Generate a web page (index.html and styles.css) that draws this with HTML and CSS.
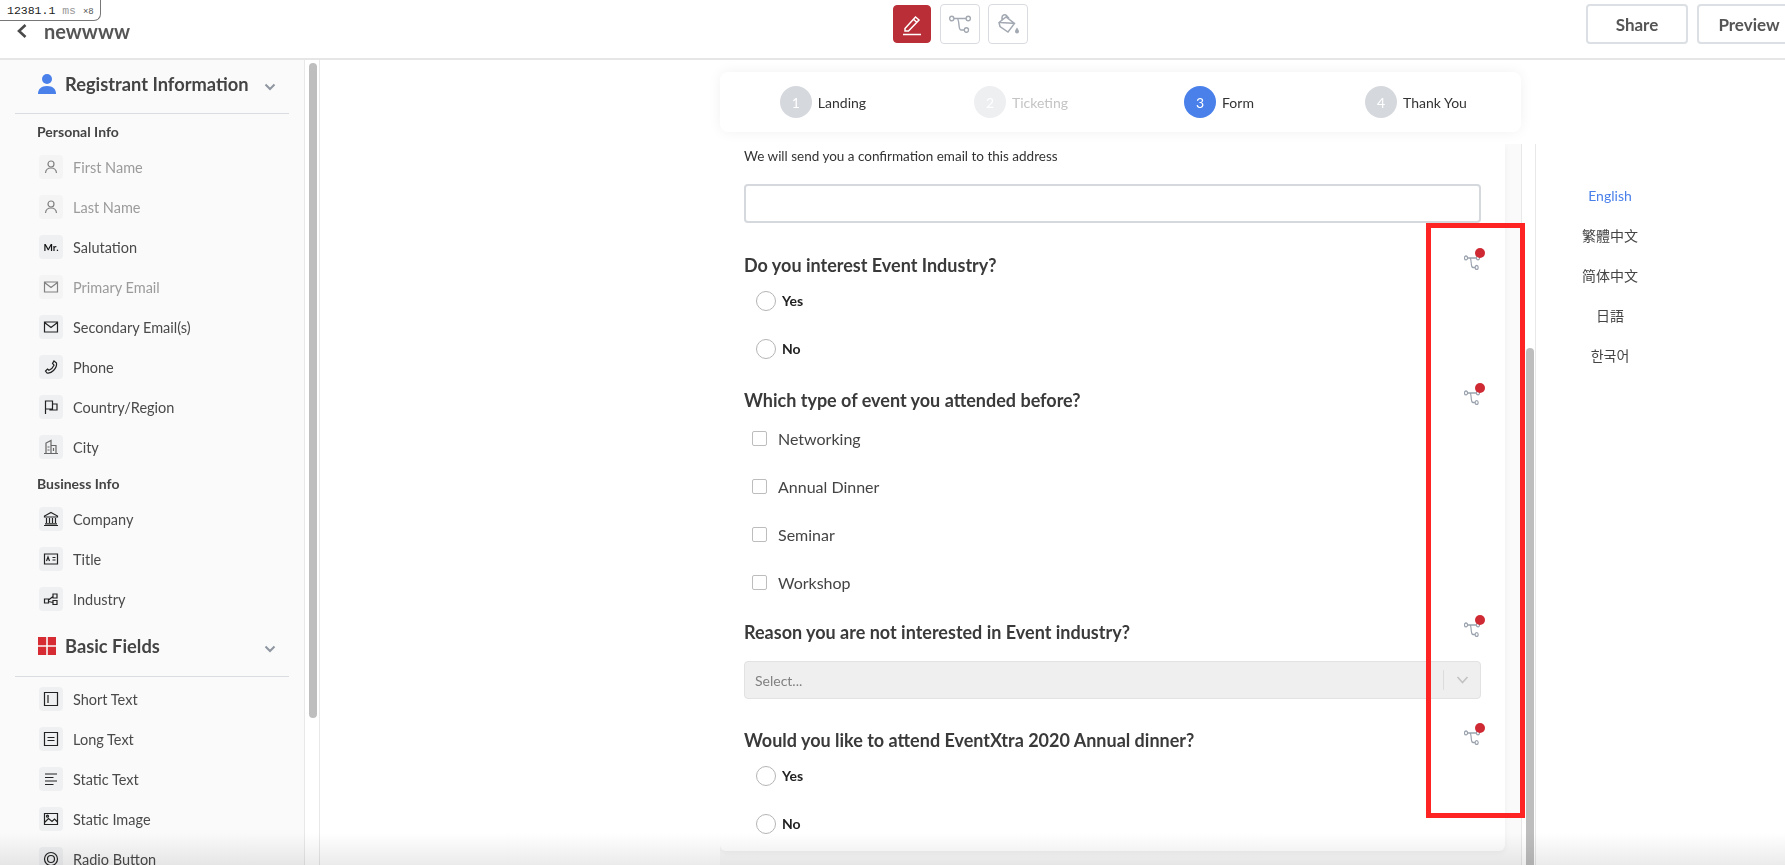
FILE: index.html
```html
<!DOCTYPE html>
<html lang="en">
<head>
  <meta charset="UTF-8" />
  <meta name="viewport" content="width=device-width, initial-scale=1.0" />
  <title>newwww</title>
  <link rel="stylesheet" href="styles.css">
</head>
<body>
  <svg class="sprites" width="0" height="0" aria-hidden="true">
    <symbol id="i-person" viewBox="0 0 16 16"><circle cx="8" cy="5" r="3" /><path d="M2.500 14c.3-3.200 2.600-5 5.500-5s5.200 1.800 5.500 5" /></symbol>
    <symbol id="i-mail" viewBox="0 0 16 16"><path d="M1.500 3h13v10h-13zM1.500 3.500L8 8.500l6.500-5" /></symbol>
    <symbol id="i-phone" viewBox="0 0 16 16"><path d="M11 2l2.500 2c.5 3-1 5.500-3 7.500s-4.500 3-6.500 2.500L2.500 12l2-2 1.500 1.200c2-.7 4-2.700 5-5L9.500 4.500z" /></symbol>
    <symbol id="i-flag" viewBox="0 0 16 16"><path d="M2.500 15V2h7v8h-7M9.500 5h4.500v6H7v-1" /></symbol>
    <symbol id="i-city" viewBox="0 0 16 16"><path d="M1 14.500h14M3 14.500V4l5-2.500v13M8 6.500h5v8M4.500 8h2M4.500 11h2M10.500 9v3" /></symbol>
    <symbol id="i-bank" viewBox="0 0 16 16"><path d="M8 1.500L14.500 5v1h-13V5zM1 14.500h14M2 12.800h12M3.500 7v5M6.500 7v5M9.500 7v5M12.500 7v5" /></symbol>
    <symbol id="i-card" viewBox="0 0 16 16"><path d="M1.500 3h13v10h-13zM3.500 10l1.500-4 1.500 4M9.500 6.500h3M9.500 9h3" /></symbol>
    <symbol id="i-tree" viewBox="0 0 16 16"><path d="M1.500 8h4v4h-4zM10 3h4v4h-4zM10 9.500h4v4h-4zM5.500 9L10 5.500M5.500 10.500L10 11.500" /></symbol>
    <symbol id="i-short" viewBox="0 0 16 16"><path d="M1.500 1.500h13v13h-13zM5 4v8" /></symbol>
    <symbol id="i-long" viewBox="0 0 16 16"><path d="M1.500 1.500h13v13h-13z" /><path class="thick" d="M4.500 6.500h7M4.500 9.500h7" /></symbol>
    <symbol id="i-lines" viewBox="0 0 16 16"><path d="M2 3h12M2 6.500h8.500M2 10h12M2 13.500h8.500" /></symbol>
    <symbol id="i-image" viewBox="0 0 16 16"><path d="M1.500 2.500h13v11h-13zM1.500 11.500l4-4 3.500 3 2.500-2.500 3 3" /><circle cx="4.500" cy="5.200" r="1" /></symbol>
    <symbol id="i-radio" viewBox="0 0 16 16"><circle cx="8" cy="8" r="6.500" /><circle class="solid" cx="8" cy="8" r="3.500" /></symbol>
    <symbol id="i-logic" viewBox="0 0 24 18" preserveAspectRatio="none"><circle cx="3" cy="3.500" r="2.300" /><circle cx="21" cy="3.500" r="2.300" /><circle cx="19" cy="15" r="2.300" /><path d="M5.300 3.500h13.400M9 3.500c1.500 1 1.500 3 2 7.500.2 2 1 4 2.500 4h3.200" /></symbol>
  </svg>

  <div class="debug-badge"><b>12381.1</b> ms <small>×8</small></div>

  <header class="topbar">
    <div class="topbar-left">
      <svg class="back" viewBox="0 0 12 16"><path d="M9.500 2L3 8l6.500 6" /></svg>
      <span class="event-name">newwww</span>
    </div>
    <div class="tools">
      <button class="tool tool-active" type="button">
        <svg viewBox="0 0 24 24"><path d="M5 16.500L15.500 5l3.500 3L8.500 19H5zM13.500 7.300l3.500 3.200M3 22.500h18" /></svg>
      </button>
      <button class="tool" type="button">
        <svg class="tool-logic"><use href="#i-logic" /></svg>
      </button>
      <button class="tool" type="button">
        <svg viewBox="0 0 24 24"><path d="M3 10.500L10 5l8.500 6.500-6.500 8.500-8-5.500zM3 10.500C5 10 12 11 18.500 11.500M6 8V5.500C6 3 9 2 10.500 3.500L13 6.500" /><path class="drop" d="M21 15.500c1.300 2 2 3 2 4a2 2 0 0 1-4 0c0-1 .7-2 2-4z" /></svg>
      </button>
    </div>
    <div class="actions">
      <button class="action" type="button">Share</button>
      <button class="action action-preview" type="button">Preview</button>
    </div>
  </header>

  <div class="workspace">
    <aside class="sidebar">
      <section class="palette">
        <h2 class="palette-title">
          <svg class="palette-icon" viewBox="0 0 18 20"><circle cx="9" cy="5" r="5" fill="#4a80ea" /><path d="M0 20c0-5 3-8 9-8s9 3 9 8z" fill="#4a80ea" /></svg>
          <span>Registrant Information</span>
          <svg class="caret" viewBox="0 0 12 8"><path d="M1.500 1.500L6 6l4.500-4.500" /></svg>
        </h2>
        <h3 class="palette-group">Personal Info</h3>
        <ul class="palette-list">
          <li class="palette-item is-used"><span class="glyph"><svg><use href="#i-person" /></svg></span>First Name</li>
          <li class="palette-item is-used"><span class="glyph"><svg><use href="#i-person" /></svg></span>Last Name</li>
          <li class="palette-item"><span class="glyph glyph-text">Mr.</span>Salutation</li>
          <li class="palette-item is-used"><span class="glyph"><svg><use href="#i-mail" /></svg></span>Primary Email</li>
          <li class="palette-item"><span class="glyph"><svg><use href="#i-mail" /></svg></span>Secondary Email(s)</li>
          <li class="palette-item"><span class="glyph"><svg><use href="#i-phone" /></svg></span>Phone</li>
          <li class="palette-item"><span class="glyph"><svg><use href="#i-flag" /></svg></span>Country/Region</li>
          <li class="palette-item"><span class="glyph glyph-soft"><svg><use href="#i-city" /></svg></span>City</li>
        </ul>
        <h3 class="palette-group palette-group-next">Business Info</h3>
        <ul class="palette-list">
          <li class="palette-item"><span class="glyph"><svg><use href="#i-bank" /></svg></span>Company</li>
          <li class="palette-item"><span class="glyph"><svg><use href="#i-card" /></svg></span>Title</li>
          <li class="palette-item"><span class="glyph"><svg><use href="#i-tree" /></svg></span>Industry</li>
        </ul>
      </section>
      <section class="palette palette-basic">
        <h2 class="palette-title">
          <svg class="palette-icon" viewBox="0 0 18 18"><path d="M0 0h8.200v8.200H0zM9.800 0H18v8.200H9.800zM0 9.800h8.200V18H0zM9.800 9.800H18V18H9.800z" fill="#d62b32" /></svg>
          <span>Basic Fields</span>
          <svg class="caret" viewBox="0 0 12 8"><path d="M1.500 1.500L6 6l4.500-4.500" /></svg>
        </h2>
        <ul class="palette-list palette-list-basic">
          <li class="palette-item"><span class="glyph"><svg><use href="#i-short" /></svg></span>Short Text</li>
          <li class="palette-item"><span class="glyph"><svg><use href="#i-long" /></svg></span>Long Text</li>
          <li class="palette-item"><span class="glyph"><svg><use href="#i-lines" /></svg></span>Static Text</li>
          <li class="palette-item"><span class="glyph"><svg><use href="#i-image" /></svg></span>Static Image</li>
          <li class="palette-item"><span class="glyph"><svg><use href="#i-radio" /></svg></span>Radio Button</li>
        </ul>
      </section>
    </aside>
    <div class="rail rail-side"><div class="thumb thumb-side"></div></div>

    <main class="canvas">
      <div class="stage">
        <nav class="steps">
          <div class="step"><span class="step-num">1</span>Landing</div>
          <div class="step step-off"><span class="step-num">2</span>Ticketing</div>
          <div class="step step-on"><span class="step-num">3</span>Form</div>
          <div class="step"><span class="step-num">4</span>Thank You</div>
        </nav>
        <div class="viewport">
          <div class="form-wrap">
            <form class="form-card" onsubmit="return false">
              <p class="note">We will send you a confirmation email to this address</p>
              <input class="text-input" type="text" />

              <div class="question question-q1">
                <h4 class="question-title">Do you interest Event Industry?<span class="logic-flag"><svg><use href="#i-logic" /></svg></span></h4>
                <label class="radio-row"><span class="radio"></span>Yes</label>
                <label class="radio-row"><span class="radio"></span>No</label>
              </div>

              <div class="question">
                <h4 class="question-title">Which type of event you attended before?<span class="logic-flag"><svg><use href="#i-logic" /></svg></span></h4>
                <div class="check-list">
                  <label class="check-row"><span class="check"></span>Networking</label>
                  <label class="check-row"><span class="check"></span>Annual Dinner</label>
                  <label class="check-row"><span class="check"></span>Seminar</label>
                  <label class="check-row"><span class="check"></span>Workshop</label>
                </div>
              </div>

              <div class="question question-q3">
                <h4 class="question-title">Reason you are not interested in Event industry?<span class="logic-flag"><svg><use href="#i-logic" /></svg></span></h4>
                <div class="fake-select">
                  <span class="fake-select-value">Select...</span>
                  <span class="fake-select-caret"><svg viewBox="0 0 12 8"><path d="M1 1l5 5.500L11 1" /></svg></span>
                </div>
              </div>

              <div class="question question-q4">
                <h4 class="question-title">Would you like to attend EventXtra 2020 Annual dinner?<span class="logic-flag"><svg><use href="#i-logic" /></svg></span></h4>
                <label class="radio-row"><span class="radio"></span>Yes</label>
                <label class="radio-row"><span class="radio"></span>No</label>
              </div>
            </form>
          </div>
        </div>
      </div>
      <div class="rail rail-main"><div class="thumb thumb-main"></div></div>
      <ul class="langs">
        <li class="lang lang-on">English</li>
        <li class="lang" lang="zh-Hant">繁體中文</li>
        <li class="lang" lang="zh-Hans">简体中文</li>
        <li class="lang" lang="ja">日語</li>
        <li class="lang" lang="ko">한국어</li>
      </ul>
    </main>
  </div>

  <div class="highlight-box"></div>
  <div class="bottom-fade"></div>
</body>
</html>
```

FILE: styles.css
```css
* {
  box-sizing: border-box;
}

html, body {
  height: 100%;
}

body {
  margin: 0;
  overflow: hidden;
  background: #fff;
  color: #444;
  font-family: Lato, "Noto Sans CJK TC", sans-serif;
  font-size: 14px;
}

.sprites {
  position: absolute;
}

h2, h3, h4, p, ul {
  margin: 0;
  padding: 0;
}

ul {
  list-style: none;
}

/* recording badge in the corner */
.debug-badge {
  position: absolute;
  top: 0;
  left: 0;
  z-index: 20;
  width: 101px;
  height: 21px;
  padding: 2px 0 0 7px;
  background: #fff;
  border: 1px solid #777;
  border-top: none;
  border-left: none;
  border-bottom-right-radius: 7px;
  font-family: "Liberation Mono", monospace;
  font-size: 11.500px;
  line-height: 17px;
  color: #999;
  white-space: nowrap;
}

.debug-badge b {
  font-weight: 400;
  color: #222;
}

.debug-badge small {
  font-size: 9px;
  color: #555;
}

/* top bar */
.topbar {
  display: flex;
  align-items: flex-start;
  height: 60px;
  padding-top: 4px;
  overflow: hidden;
  border-bottom: 2px solid #e6e6e6;
}

.topbar-left {
  display: flex;
  align-items: center;
  width: 893px;
  height: 54px;
  padding-left: 16px;
}

.back {
  width: 12px;
  height: 16px;
  margin-right: 16px;
  fill: none;
  stroke: #4a4a4a;
  stroke-width: 2.600;
}

.event-name {
  font-size: 20px;
  font-weight: 700;
  color: #555;
}

.tools {
  display: flex;
  gap: 8px;
  align-items: center;
  height: 40px;
}

.tool {
  display: flex;
  align-items: center;
  justify-content: center;
  width: 40px;
  height: 40px;
  padding: 0;
  background: #fff;
  border: 1px solid #d8dbe0;
  border-radius: 4px;
}

.tool svg {
  width: 24px;
  height: 24px;
  fill: none;
  stroke: #a3a9b2;
  stroke-width: 1.500;
}

.tool .drop {
  fill: #a3a9b2;
  stroke: none;
}

.tool .tool-logic {
  width: 22px;
  height: 18px;
}

.tool-active {
  width: 38px;
  height: 38px;
  margin-right: 1px;
  background: #b92e37;
  border-color: #b92e37;
}

.tool-active svg {
  stroke: #fff;
}

.actions {
  display: flex;
  flex-shrink: 0;
  gap: 9px;
  margin-left: 558px;
}

.action {
  width: 102px;
  height: 40px;
  padding: 0;
  background: #fff;
  border: 2px solid #dcdfe3;
  border-radius: 4px;
  font-family: inherit;
  font-size: 17px;
  font-weight: 700;
  color: #555;
}

.action-preview {
  width: 104px;
  margin-right: -20px;
}

/* main layout */
.workspace {
  display: flex;
  height: calc(100vh - 60px);
}

.sidebar {
  flex: 0 0 305px;
  height: 100%;
  overflow: hidden;
  padding-top: 2px;
  background: #fafafa;
  border-right: 1px solid #e8e8e8;
}

.rail {
  position: relative;
  flex: 0 0 15px;
  overflow: hidden;
}

.rail-side {
  flex-basis: 15px;
  border-right: 1px solid #e8e8e8;
}

.thumb {
  position: absolute;
  width: 8px;
  background: #bebebe;
  border-radius: 4px;
}

.thumb-side {
  top: 3px;
  left: 4px;
  height: 655px;
}

.palette-title {
  display: flex;
  align-items: center;
  height: 52px;
  margin: 0 15px;
  padding: 0 0 8px 23px;
  border-bottom: 1px solid #d9dce0;
  font-size: 18.300px;
  font-weight: 700;
  color: #444;
  white-space: nowrap;
}

.palette-icon {
  flex: 0 0 18px;
  width: 18px;
  height: 20px;
  margin-right: 9px;
}

.caret {
  width: 12px;
  height: 8px;
  margin-left: auto;
  margin-right: 13px;
  margin-top: 6px;
  fill: none;
  stroke: #8f96a0;
  stroke-width: 2;
}

.palette-group {
  height: 18px;
  margin: 9px 0 0 37px;
  font-size: 14px;
  font-weight: 700;
  line-height: 18px;
  color: #444;
}

.palette-group-next {
  margin-top: 8px;
}

.palette-list {
  margin-top: 6px;
}

.palette-item {
  display: flex;
  align-items: center;
  gap: 10px;
  height: 40px;
  padding-left: 39px;
  font-size: 14.500px;
  color: #4a4a4a;
}

.palette-item.is-used {
  color: #9b9b9b;
}

.palette-item.is-used .glyph {
  background: #f4f4f5;
}

.palette-item.is-used .glyph svg {
  stroke: #808080;
}

.glyph {
  display: flex;
  flex: 0 0 24px;
  align-items: center;
  justify-content: center;
  width: 24px;
  height: 24px;
  background: #eff0f2;
  border-radius: 4px;
}

.glyph svg {
  width: 16px;
  height: 16px;
  fill: none;
  stroke: #222;
  stroke-width: 1.200;
}

.glyph .thick {
  stroke-width: 2;
}

.glyph .solid {
  fill: #222;
}

.glyph-soft svg {
  stroke: #666;
}

.glyph-text {
  font-size: 10px;
  font-weight: 700;
  color: #111;
}

.palette-basic {
  margin-top: 5px;
}

.palette-basic .palette-title {
  height: 53px;
  padding-bottom: 9px;
}

.palette-list-basic {
  margin-top: 2px;
}

/* canvas */
.canvas {
  display: flex;
  flex: 1;
  min-width: 0;
  height: 100%;
}

.stage {
  display: flex;
  flex-direction: column;
  flex: 0 0 800px;
  margin-left: 400px;
  min-height: 0;
}

.steps {
  display: grid;
  flex: 0 0 60px;
  grid-template-columns: 200px 196px 200px 194px;
  margin-top: 12px;
  position: relative;
  z-index: 2;
  background: #fff;
  border-radius: 8px;
  box-shadow: 0 0 14px rgba(0, 0, 0, 0.06);
}

.step {
  display: flex;
  align-items: center;
  justify-content: center;
  gap: 6px;
  padding-left: 6px;
  font-size: 14px;
  color: #333;
}

.step-num {
  display: flex;
  align-items: center;
  justify-content: center;
  width: 32px;
  height: 32px;
  background: #d5d8dd;
  border-radius: 50%;
  font-size: 14px;
  color: #fff;
}

.step-off {
  color: #c4c4c4;
}

.step-off .step-num {
  background: #eeeff1;
}

.step-on .step-num {
  background: #4a80ea;
}

.viewport {
  flex: 1;
  min-height: 0;
  margin-top: 12px;
  overflow: hidden;
}

.form-wrap {
  width: 801px;
  height: 100%;
  padding-right: 16px;
  background: #fafafa;
}

.form-card {
  height: 707px;
  padding: 0 24px;
  background: #fff;
  border-radius: 0 0 6px 6px;
  box-shadow: 0 2px 6px rgba(0, 0, 0, 0.05);
}

.note {
  font-size: 13.500px;
  line-height: 24px;
  color: #333;
}

.text-input {
  display: block;
  width: 100%;
  height: 39px;
  margin-top: 16px;
  background: #fff;
  border: 2px solid #d5d8dd;
  border-radius: 4px;
}

.question {
  margin-top: 15px;
}

.question-q1 {
  margin-top: 30px;
}

.question-q3 {
  margin-top: 14px;
}

.question-q4 {
  margin-top: 29px;
}

.question-title {
  display: flex;
  justify-content: space-between;
  position: relative;
  height: 24px;
  font-size: 18px;
  font-weight: 700;
  line-height: 24px;
  color: #3a3a3a;
}

.logic-flag {
  position: absolute;
  top: 2px;
  right: 1px;
  width: 16px;
  height: 15px;
}

.logic-flag svg {
  display: block;
  width: 16px;
  height: 15px;
  fill: none;
  stroke: #9aa2ad;
  stroke-width: 1.700;
}

.logic-flag::after {
  content: "";
  position: absolute;
  top: -7px;
  right: -5px;
  width: 10px;
  height: 10px;
  background: #cf2a33;
  border-radius: 50%;
}

.radio-row {
  display: flex;
  align-items: center;
  gap: 6px;
  height: 48px;
  padding: 0 0 2px 12px;
  font-size: 14px;
  font-weight: 700;
  color: #222;
}

.radio {
  width: 20px;
  height: 20px;
  margin-top: 2px;
  background: #fff;
  border: 1px solid #b5b5b5;
  border-radius: 50%;
}

.check-list {
  margin-top: 2px;
}

.check-row {
  display: flex;
  align-items: center;
  gap: 11px;
  height: 48px;
  padding-left: 8px;
  font-size: 16px;
  color: #444;
}

.check {
  width: 15px;
  height: 15px;
  background: #fff;
  border: 1px solid #bdbdbd;
  border-radius: 2px;
}

.fake-select {
  display: flex;
  align-items: center;
  height: 38px;
  margin-top: 17px;
  background: #efefef;
  border: 1px solid #e2e2e2;
  border-radius: 4px;
}

.fake-select-value {
  flex: 1;
  padding-left: 10px;
  font-size: 14px;
  color: #808080;
}

.fake-select-caret {
  display: flex;
  align-items: center;
  justify-content: center;
  width: 37px;
  height: 20px;
  border-left: 1px solid #dcdcdc;
}

.fake-select-caret svg {
  width: 13px;
  height: 8px;
  fill: none;
  stroke: #c2c2c2;
  stroke-width: 1.600;
}

.rail-main {
  flex: 0 0 15px;
  margin-top: 84px;
  border-left: 1px solid #e8e8e8;
  border-right: 1px solid #e8e8e8;
}

.thumb-main {
  top: 204px;
  bottom: -6px;
  left: 4px;
}

.langs {
  flex: 0 0 148px;
  padding-top: 116px;
}

.lang {
  height: 40px;
  font-size: 14px;
  line-height: 40px;
  text-align: center;
  color: #444;
}

.lang-on {
  color: #4a80ea;
}

.lang[lang="zh-Hans"] {
  font-family: Lato, "Noto Sans CJK SC", sans-serif;
}

.lang[lang="ja"] {
  font-family: Lato, "Noto Sans CJK JP", sans-serif;
}

.lang[lang="ko"] {
  font-family: Lato, "Noto Sans CJK KR", sans-serif;
}

/* annotation drawn over the screenshot */
.highlight-box {
  position: absolute;
  top: 223px;
  left: 1426px;
  width: 99px;
  height: 595px;
  border: 5px solid #ff2424;
  pointer-events: none;
}

.bottom-fade {
  position: absolute;
  right: 0;
  bottom: 0;
  left: 0;
  height: 32px;
  background: linear-gradient(#fff, #ebebeb);
  mix-blend-mode: multiply;
  pointer-events: none;
}
```
